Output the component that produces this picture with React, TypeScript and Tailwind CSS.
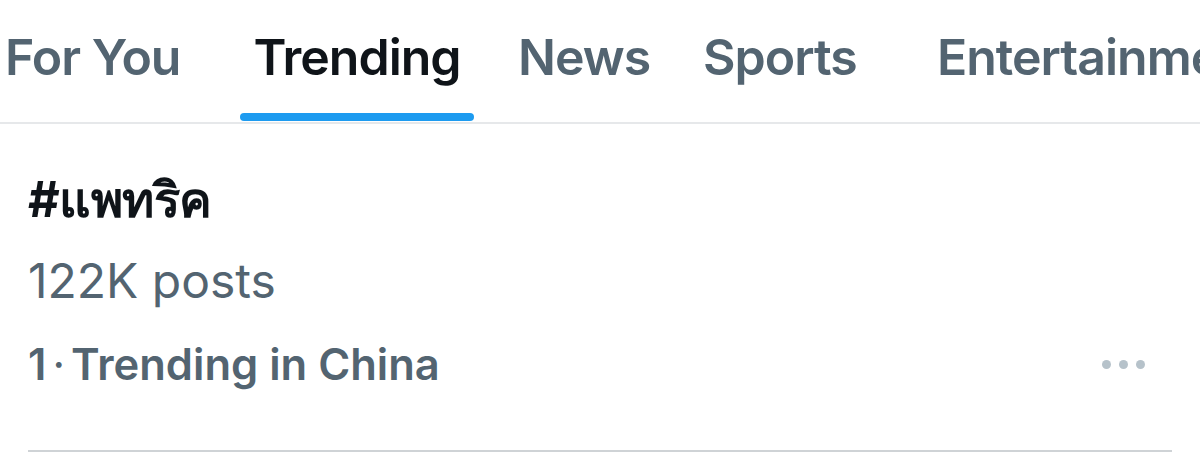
import React from 'react';

const tabs = [
  { label: 'For You', active: false, box: 'w-[240px] pl-[5px]' },
  { label: 'Trending', active: true, box: 'w-[234px] justify-center' },
  { label: 'News', active: false, box: 'w-[229px] pl-[44px]' },
  { label: 'Sports', active: false, box: 'w-[234px]' },
  { label: 'Entertainment', active: false, box: 'w-[400px]' },
];

export default function App() {
  return (
    <div className="w-[1200px] h-[456px] bg-white overflow-hidden font-['Inter','Noto_Sans',sans-serif]">
      <nav className="flex h-[124px] border-b-2 border-[#e6e8ea] whitespace-nowrap overflow-hidden">
        {tabs.map((t) => (
          <div key={t.label} className={`${t.box} relative shrink-0 flex`}>
            <span
              className={`pt-[26px] text-[50px] font-semibold leading-[62px] tracking-[-1px] ${
                t.active ? 'text-[#0f1419]' : 'text-[#536471]'
              }`}
            >
              {t.label}
            </span>
            {t.active && (
              <div className="absolute left-0 right-0 bottom-[1px] h-[8px] rounded-full bg-[#1d9bf0]" />
            )}
          </div>
        ))}
      </nav>

      <section className="px-[28px] pt-[48px]">
        <div className="flex flex-col">
          <span className="text-[49px] font-bold leading-[56px] tracking-[-0.5px] text-[#0f1419]">#แพทริค</span>
          <span className="mt-[24px] text-[48px] font-normal leading-[58px] text-[#536471]">122K posts</span>
          <div className="mt-[26px] flex items-center justify-between">
            <span className="text-[43.5px] font-semibold leading-[56px] text-[#536471]">
              1<span className="mx-[6px] font-normal">·</span>Trending in China
            </span>
            <div className="flex gap-[8px] pr-[27px]">
              <span className="w-[9px] h-[9px] rounded-full bg-[#b6c2ca]" />
              <span className="w-[9px] h-[9px] rounded-full bg-[#b6c2ca]" />
              <span className="w-[9px] h-[9px] rounded-full bg-[#b6c2ca]" />
            </div>
          </div>
        </div>
        <div className="mt-[58px] h-[2px] bg-[#cfd3d6]" />
      </section>
    </div>
  );
}
